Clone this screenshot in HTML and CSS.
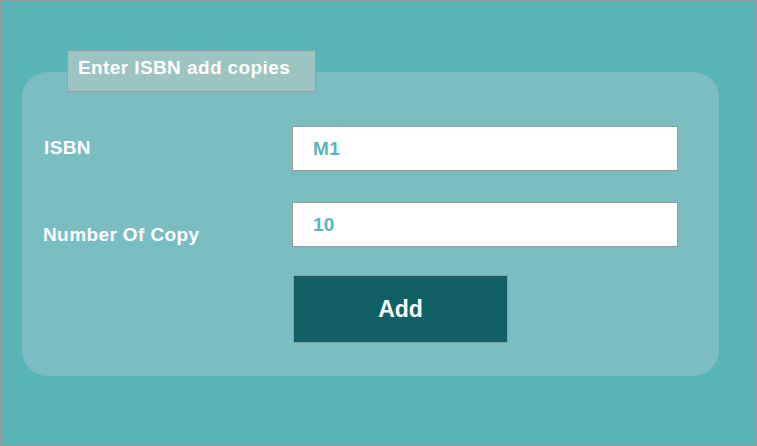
FILE: index.html
```html
<!DOCTYPE html>
<html>
<head>
<meta charset="utf-8">
<link rel="stylesheet" href="styles.css">
</head>
<body>
<div class="frame">
  <div class="card">
    <div class="legend">Enter ISBN add copies</div>
    <div class="row row-isbn">
      <div class="label">ISBN</div>
      <div class="input">M1</div>
    </div>
    <div class="row row-copy">
      <div class="label label-low">Number Of Copy</div>
      <div class="input">10</div>
    </div>
    <div class="row row-btn">
      <div class="spacer"></div>
      <button class="btn">Add</button>
    </div>
  </div>
</div>
</body>
</html>
```
FILE: styles.css
```css
html, body {
  margin: 0;
  padding: 0;
}
body {
  width: 757px;
  height: 446px;
  overflow: hidden;
  font-family: "Liberation Sans", Arial, sans-serif;
}
.frame {
  box-sizing: border-box;
  width: 757px;
  height: 446px;
  border: 1px solid #999999;
  background: #5ab5b7;
  padding: 71px 0 0 21px;
}
.card {
  position: relative;
  box-sizing: border-box;
  width: 697px;
  height: 304px;
  background: #7bbec2;
  border-radius: 26px;
  padding: 54px 0 0 22px;
  display: flex;
  flex-direction: column;
}
.legend {
  position: absolute;
  left: 45px;
  top: -22px;
  box-sizing: border-box;
  width: 249px;
  height: 42px;
  background: #9cc4c1;
  border: 1px solid #9a9f9e;
  color: #ffffff;
  font-weight: bold;
  font-size: 19px;
  letter-spacing: 0.4px;
  padding: 6px 0 0 10px;
}
.row {
  display: flex;
  align-items: center;
}
.row-copy {
  margin-top: 31px;
}
.row-btn {
  margin-top: 28px;
}
.label {
  width: 248px;
  color: #ffffff;
  font-weight: bold;
  font-size: 19px;
  letter-spacing: 0.4px;
}
.row-isbn .label {
  padding-bottom: 2px;
}
.label-low {
  padding-top: 21px;
  margin-left: -1px;
  width: 249px;
}
.spacer {
  width: 249px;
}
.input {
  box-sizing: border-box;
  width: 386px;
  height: 45px;
  background: #ffffff;
  border: 1px solid #999999;
  color: #5ab5b7;
  font-weight: bold;
  font-size: 19px;
  letter-spacing: 0.3px;
  padding: 0 0 0 20px;
  display: flex;
  align-items: center;
}
.btn {
  box-sizing: border-box;
  width: 215px;
  height: 68px;
  background: #116064;
  border: 1px solid #999999;
  color: #ffffff;
  font-family: "Liberation Sans", Arial, sans-serif;
  font-weight: bold;
  font-size: 23px;
  padding: 0;
  margin: 0;
}
```
